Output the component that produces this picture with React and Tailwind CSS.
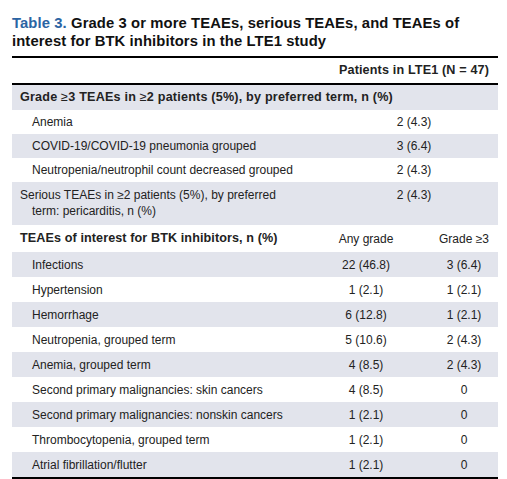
import React from 'react';

const GE = () => <span className="font-normal">≥</span>;

const firstRows = [
  { label: 'Anemia', value: '2 (4.3)' },
  { label: 'COVID-19/COVID-19 pneumonia grouped', value: '3 (6.4)', shade: true },
  { label: 'Neutropenia/neutrophil count decreased grouped', value: '2 (4.3)' },
];

const btkRows = [
  ['Infections', '22 (46.8)', '3 (6.4)'],
  ['Hypertension', '1 (2.1)', '1 (2.1)'],
  ['Hemorrhage', '6 (12.8)', '1 (2.1)'],
  ['Neutropenia, grouped term', '5 (10.6)', '2 (4.3)'],
  ['Anemia, grouped term', '4 (8.5)', '2 (4.3)'],
  ['Second primary malignancies: skin cancers', '4 (8.5)', '0'],
  ['Second primary malignancies: nonskin cancers', '1 (2.1)', '0'],
  ['Thrombocytopenia, grouped term', '1 (2.1)', '0'],
  ['Atrial fibrillation/flutter', '1 (2.1)', '0'],
];

const App = () => {
  return (
    <div className="min-h-screen bg-white text-[#222] font-['Liberation_Sans',Arial,sans-serif]">
      <div className="pl-3 pr-[9px] pt-[14px]">
        <h1 className="text-[14.8px] leading-[18px] font-bold text-[#111] tracking-[0.1px]">
          <span className="text-[#2b64a3]">Table 3.</span> Grade 3 or more TEAEs, serious TEAEs, and TEAEs of interest for BTK inhibitors in the LTE1 study
        </h1>

        <div className="mt-[6px] border-t-2 border-black">
          <div className="grid grid-cols-[318px_72px_96px] h-[25px] items-center text-[12.6px] font-bold">
            <div />
            <div className="col-span-2 text-center tracking-[0.15px]">Patients in LTE1 (N = 47)</div>
          </div>
          <div className="border-t-2 border-black" />

          <div className="h-[25px] flex items-center bg-[#e2e4ec] px-2 text-[12.6px] font-bold tracking-[0.2px]">
            <span>
              Grade <GE />3 TEAEs in <GE />2 patients (5%), by preferred term, n (%)
            </span>
          </div>

          {firstRows.map((r) => (
            <div
              key={r.label}
              className={`grid grid-cols-[318px_72px_96px] h-[24px] items-center text-[12px] ${r.shade ? 'bg-[#e2e4ec]' : ''}`}
            >
              <div className="pl-5">{r.label}</div>
              <div className="col-span-2 text-center">{r.value}</div>
            </div>
          ))}

          <div className="grid grid-cols-[318px_72px_96px] h-[43px] bg-[#e2e4ec] text-[12px] leading-[16px] pt-[5px]">
            <div className="pl-2">
              Serious TEAEs in <GE />2 patients (5%), by preferred
              <div className="pl-3">term: pericarditis, n (%)</div>
            </div>
            <div className="col-span-2 text-center">2 (4.3)</div>
          </div>

          <div className="grid grid-cols-[318px_72px_96px] h-[27px] items-center text-[12px]">
            <div className="pl-2 font-bold text-[12.6px] tracking-[0.1px]">TEAEs of interest for BTK inhibitors, n (%)</div>
            <div className="text-center">Any grade</div>
            <div className="pl-[28px] text-center">
              <span>Grade <GE />3</span>
            </div>
          </div>

          {btkRows.map(([label, any, g3], i) => (
            <div
              key={label}
              className={`grid grid-cols-[318px_72px_96px] h-[25px] items-center text-[12px] ${i % 2 === 0 ? 'bg-[#e2e4ec]' : ''}`}
            >
              <div className="pl-5">{label}</div>
              <div className="text-center">{any}</div>
              <div className="pl-[28px] text-center">{g3}</div>
            </div>
          ))}
          <div className="border-t-[3px] border-black" />
        </div>
      </div>
    </div>
  );
};

export default App;
